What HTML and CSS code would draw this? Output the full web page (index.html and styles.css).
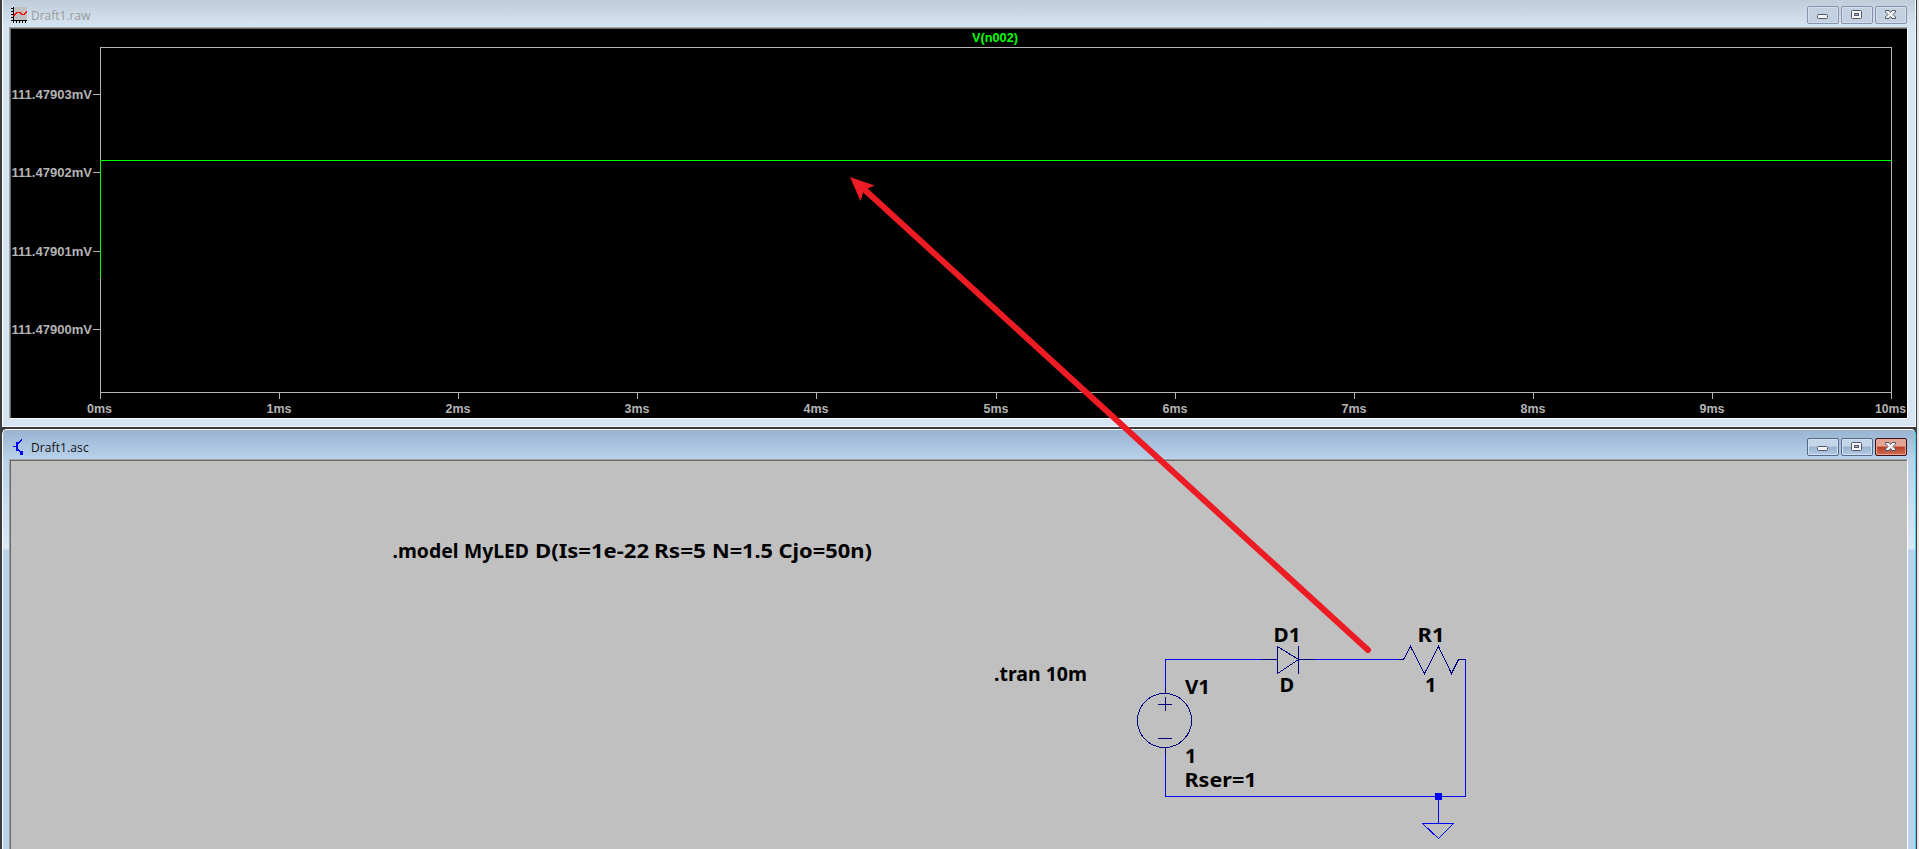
FILE: index.html
```
<!DOCTYPE html>
<html>
<head>
  <meta charset="utf-8">
  <title>Draft1</title>
  <link rel="stylesheet" href="styles.css">
</head>
<body>
  <div class="workspace">

    <!-- Waveform window -->
    <div class="window plot-window">
      <div class="title-bar">
        <svg class="title-icon" width="16" height="16" shape-rendering="crispEdges">
          <rect x="2" width="14" height="13" fill="#c0c0c0"/>
          <path d="M2.5 0V15.5M0 13.5H16M0 1.5H2M0 4.5H2M0 7.5H2M0 10.5H2M5.5 14V16M8.5 14V16M11.5 14V16M14.5 14V16" stroke="#000" fill="none"/>
          <path d="M3 9L6 5.5H9L11 7.5H13L16 4" stroke="#f00" stroke-width="1.5" fill="none"/>
        </svg>
        <span class="title">Draft1.raw</span>
        <div class="buttons">
          <div class="button"><svg width="30" height="16"><rect x="9.5" y="7.5" width="10" height="4" rx="1" fill="#f4f4f4" stroke="#535666"/></svg></div>
          <div class="button"><svg width="30" height="16"><rect x="9.5" y="3.5" width="10" height="8" rx="1" fill="#f4f4f4" stroke="#535666"/><rect x="12.5" y="6.5" width="4" height="2" fill="#a9bfd8" stroke="#535666"/></svg></div>
          <div class="button"><svg width="30" height="16"><path d="M9.5 3.5H13L14.5 5.5L16 3.5H19.5V5L17 7.5L19.5 10V11.5H16L14.5 9.5L13 11.5H9.5V10L12 7.5L9.5 5Z" fill="#f4f4f4" stroke="#535666"/></svg></div>
        </div>
      </div>
      <div class="pane plot-pane">
        <svg class="plot" width="1896" height="389" viewBox="11 29 1896 389">
          <g class="axis">
            <path d="M100.5 399V47.5H1891.5V399M100 392.5H1892"/>
            <path d="M93 94.5H100M93 172.5H100M93 251.5H100M93 329.5H100"/>
            <path d="M279.5 392V399M458.5 392V399M637.5 392V399M816.5 392V399M996.5 392V399M1175.5 392V399M1354.5 392V399M1533.5 392V399M1712.5 392V399"/>
          </g>
          <path class="trace" d="M100.5 278V160.5H1892"/>
          <g class="plot-text">
            <text x="11.5" y="99" textLength="80.5" lengthAdjust="spacingAndGlyphs">111.47903mV</text>
            <text x="11.5" y="177" textLength="80.5" lengthAdjust="spacingAndGlyphs">111.47902mV</text>
            <text x="11.5" y="256" textLength="80.5" lengthAdjust="spacingAndGlyphs">111.47901mV</text>
            <text x="11.5" y="334" textLength="80.5" lengthAdjust="spacingAndGlyphs">111.47900mV</text>
          </g>
          <g class="plot-text x-labels">
            <text x="99.5" y="413" textLength="25" lengthAdjust="spacingAndGlyphs">0ms</text>
            <text x="279" y="413" textLength="25" lengthAdjust="spacingAndGlyphs">1ms</text>
            <text x="458" y="413" textLength="25" lengthAdjust="spacingAndGlyphs">2ms</text>
            <text x="637" y="413" textLength="25" lengthAdjust="spacingAndGlyphs">3ms</text>
            <text x="816" y="413" textLength="25" lengthAdjust="spacingAndGlyphs">4ms</text>
            <text x="996" y="413" textLength="25" lengthAdjust="spacingAndGlyphs">5ms</text>
            <text x="1175" y="413" textLength="25" lengthAdjust="spacingAndGlyphs">6ms</text>
            <text x="1354" y="413" textLength="25" lengthAdjust="spacingAndGlyphs">7ms</text>
            <text x="1533" y="413" textLength="25" lengthAdjust="spacingAndGlyphs">8ms</text>
            <text x="1712" y="413" textLength="25" lengthAdjust="spacingAndGlyphs">9ms</text>
            <text x="1890.5" y="413" textLength="31" lengthAdjust="spacingAndGlyphs">10ms</text>
            <text class="trace-name" x="995" y="42" textLength="46" lengthAdjust="spacingAndGlyphs">V(n002)</text>
          </g>
        </svg>
      </div>
    </div>

    <!-- Schematic window -->
    <div class="window schematic-window active">
      <div class="title-bar">
        <svg class="title-icon" width="16" height="16" shape-rendering="crispEdges">
          <path d="M2 7.5H6M6 5.5L11 0.5M6 9.5L12 15.5" stroke="#00f" fill="none"/>
          <path d="M5 3H7V12H5ZM12 16H9V14H10V12H12Z" fill="#00f"/>
        </svg>
        <span class="title">Draft1.asc</span>
        <div class="buttons">
          <div class="button"><svg width="30" height="16"><rect x="9.5" y="7.5" width="10" height="4" rx="1" fill="#f4f4f4" stroke="#535666"/></svg></div>
          <div class="button"><svg width="30" height="16"><rect x="9.5" y="3.5" width="10" height="8" rx="1" fill="#f4f4f4" stroke="#535666"/><rect x="12.5" y="6.5" width="4" height="2" fill="#a9bfd8" stroke="#535666"/></svg></div>
          <div class="button close"><svg width="30" height="16"><path d="M9.5 3.5H13L14.5 5.5L16 3.5H19.5V5L17 7.5L19.5 10V11.5H16L14.5 9.5L13 11.5H9.5V10L12 7.5L9.5 5Z" fill="#f4f4f4" stroke="#535666"/></svg></div>
        </div>
      </div>
      <div class="pane schematic-pane">
        <svg class="schematic" width="1896" height="388" viewBox="11 461 1896 388">
          <!-- wires -->
          <path class="wire" d="M1165.5 690V659.5H1262M1314 659.5H1400M1461 659.5H1465.5V796.5H1165.5V751M1438.5 796V823.5"/>
          <path class="wire" d="M1422.5 823.5H1453.5L1438.5 838.5Z"/>
          <rect x="1435" y="793" width="7" height="7" fill="#00f"/>
          <!-- D1 -->
          <path class="part" d="M1261 659.5H1277M1277.5 646V673.5L1298.5 659.5L1277.5 646.5M1298.5 646V674M1299 659.5H1315"/>
          <!-- R1 -->
          <path class="part" d="M1398 659.5H1403.5L1410.5 646.5L1424.5 673.5L1438.5 646.5L1451.5 673.5L1458.5 659.5H1465"/>
          <!-- V1 -->
          <circle class="part" cx="1164.5" cy="720.5" r="27"/>
          <path class="part" d="M1165.5 687V693M1165.5 747V755M1158 704.5H1172M1165.5 697V711M1158 738.5H1172"/>
          <g class="label">
            <text x="392.5" y="558" textLength="66" lengthAdjust="spacingAndGlyphs">.model</text>
            <text x="464" y="558" textLength="65" lengthAdjust="spacingAndGlyphs">MyLED</text>
            <text x="535" y="558" textLength="114" lengthAdjust="spacingAndGlyphs">D(Is=1e-22</text>
            <text x="654" y="558" textLength="52" lengthAdjust="spacingAndGlyphs">Rs=5</text>
            <text x="712" y="558" textLength="61" lengthAdjust="spacingAndGlyphs">N=1.5</text>
            <text x="778.5" y="558" textLength="93.5" lengthAdjust="spacingAndGlyphs">Cjo=50n)</text>
            <text x="994" y="681" textLength="93" lengthAdjust="spacingAndGlyphs">.tran 10m</text>
            <text x="1273.5" y="642" textLength="27" lengthAdjust="spacingAndGlyphs">D1</text>
            <text x="1279.5" y="692">D</text>
            <text x="1417.5" y="642" textLength="27" lengthAdjust="spacingAndGlyphs">R1</text>
            <text x="1425" y="692">1</text>
            <text x="1185" y="694" textLength="25" lengthAdjust="spacingAndGlyphs">V1</text>
            <text x="1185" y="763">1</text>
            <text x="1184.5" y="787" textLength="72" lengthAdjust="spacingAndGlyphs">Rser=1</text>
          </g>
        </svg>
      </div>
    </div>

    <!-- Arrow drawn over both windows -->
    <svg class="arrow" width="1917" height="849">
      <path d="M866 191L1368 650" stroke="#ed1c24" stroke-width="6" stroke-linecap="round"/>
      <path d="M850 177L874.5 185.5L864 190L860.5 201Z" fill="#ed1c24"/>
    </svg>
  </div>
</body>
</html>
```
FILE: styles.css
```
body {
  margin: 0;
  background: #3c3c40;
  overflow: hidden;
}
.workspace {
  position: relative;
  display: flex;
  flex-direction: column;
  width: 1919px;
  height: 849px;
  box-sizing: border-box;
  padding: 0 1px 0 2px;
  border-right: 2px solid #e6e6e6;
  overflow: hidden;
}
.window {
  box-sizing: border-box;
  flex-shrink: 0;
  border-left: 1px solid #fff;
  border-right: 1px solid #f4f8fc;
  padding: 0 6px;
  background: #d7e4f2;
}
.plot-window {
  height: 427px;
  border-bottom: 1px solid #f4f8fc;
  background: linear-gradient(#bfcddb, #d7e4f2 27px);
}
.schematic-window {
  height: 420px;
  margin-top: 2px;
  border-top: 1px solid #fff;
  border-right-color: #3fd8f4;
  border-radius: 5px 5px 0 0;
  background: linear-gradient(#99b4d1, #b9d1ea 29px, #dae7f5 119px, #b9d1ea 120px);
}

/* Title bars */
.title-bar {
  display: flex;
  align-items: flex-start;
  box-sizing: border-box;
  height: 27px;
  padding: 6px 2px 0 2px;
  font: 12px "Open Sans", sans-serif;
  color: #9a9a9a;
}
.active .title-bar {
  height: 29px;
  padding-top: 8px;
  color: #111;
}
.title-icon {
  margin-top: 1px;
}
.title {
  margin-left: 4px;
  line-height: 19px;
}
.active .title {
  letter-spacing: 0.1px;
}
.buttons {
  display: flex;
  gap: 2px;
  margin-left: auto;
}
.button {
  box-sizing: border-box;
  width: 32px;
  height: 18px;
  border: 1px solid #8593ae;
  border-radius: 2px;
  box-shadow: inset 0 0 0 1px #d3dfec;
  background: #c2d0e0;
}
.button svg {
  display: block;
}
.active .button {
  border-color: #536a8c;
  background: linear-gradient(#c3d5e9 45%, #97b1ce 50%, #b5cce5);
}
.active .close {
  border-color: #43101a;
  box-shadow: inset 0 0 0 1px #e0a394;
  background: linear-gradient(#e3a496 45%, #b83a20 50%, #d0705a);
}

/* Client areas */
.pane {
  box-sizing: border-box;
  width: 1899px;
  border: 1px solid #a0a0a0;
  border-right-color: #fff;
  border-bottom-color: #fff;
}
.pane svg {
  display: block;
  border-top: 1px solid #696969;
  border-left: 1px solid #696969;
}
.plot-pane {
  height: 392px;
  background: #000;
}
.schematic-pane {
  height: 391px;
  background: #c0c0c0;
}

/* Waveform plot */
.axis path {
  fill: none;
  stroke: #b4b4b4;
  shape-rendering: crispEdges;
}
.trace {
  fill: none;
  stroke: #00ff00;
  shape-rendering: crispEdges;
}
.plot-text {
  font: bold 13.5px "Liberation Sans", Arial, sans-serif;
  fill: #b4b4b4;
}
.x-labels {
  text-anchor: middle;
}
/* the trace class above would outline the name too */
.plot-text .trace-name {
  fill: #00ff00;
}

/* Schematic */
.wire {
  fill: none;
  stroke: #0000ff;
  shape-rendering: crispEdges;
}
.part {
  fill: none;
  stroke: #000080;
  shape-rendering: crispEdges;
}
.label {
  font: bold 20px "Noto Sans", Tahoma, sans-serif;
  fill: #000;
}
.arrow {
  position: absolute;
  left: 0;
  top: 0;
  fill: none;
}
```
